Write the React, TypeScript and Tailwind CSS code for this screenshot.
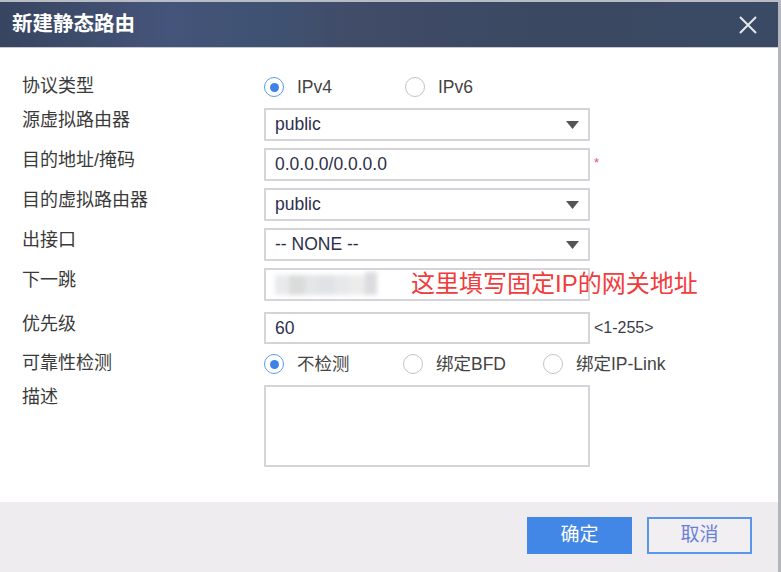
import type { ReactNode } from 'react';

const FONT = '"Liberation Sans", "Noto Sans CJK SC", sans-serif';

// ── Small pieces ─────────────────────────────────────────────────────────────

function Radio({ checked, label, width }: { checked?: boolean; label: string; width: string }) {
  return (
    <div className={`flex items-center ${width}`}>
      <span
        className={`flex h-[20px] w-[20px] items-center justify-center rounded-full border-[1.5px] bg-white ${
          checked ? 'border-[#5b9af0]' : 'border-[#c4c4c8]'
        }`}
      >
        {checked && <span className="h-[9px] w-[9px] rounded-full bg-[#3d83e6]" />}
      </span>
      <span className="ml-[13px] text-[17.5px] text-[#444]">{label}</span>
    </div>
  );
}

function Select({ value }: { value: string }) {
  return (
    <div className="flex h-[33px] w-[326px] items-center justify-between border-2 border-[#d4d4d9] bg-white pl-[9px] pr-[8px]">
      <span className="text-[17.5px] text-[#2d2f4a]">{value}</span>
      <svg width="13" height="8" viewBox="0 0 13 8" className="mr-[1px]">
        <path d="M0 0 H13 L6.5 8 Z" fill="#555" />
      </svg>
    </div>
  );
}

function Input({ value, height = 'h-[33px]', children }: { value?: string; height?: string; children?: ReactNode }) {
  return (
    <div className={`flex ${height} w-[326px] items-center border-2 border-[#d4d4d9] bg-white pl-[9px]`}>
      {value && <span className="text-[17.5px] text-[#2d2f4a]">{value}</span>}
      {children}
    </div>
  );
}

function Row({ label, className, children }: { label: string; className: string; children: ReactNode }) {
  return (
    <div className={`flex items-start ${className}`}>
      <div className="w-[242px] shrink-0 text-[18px] leading-6 text-[#3a3a3a]">{label}</div>
      <div className="flex items-center">{children}</div>
    </div>
  );
}

// ── Dialog ───────────────────────────────────────────────────────────────────

export default function App() {
  return (
    <div className="flex h-[572px] w-[781px] flex-col overflow-hidden bg-white" style={{ fontFamily: FONT }}>
      <div className="h-[2px] shrink-0 bg-[#b9bcc4]" />
      <div className="flex min-h-0 flex-1">
        <div className="flex min-w-0 flex-1 flex-col">
          {/* Header */}
          <div className="flex h-[45px] shrink-0 items-center justify-between bg-[linear-gradient(90deg,#384560_0%,#45547a_22%,#3f5272_34%,#414c68_45%,#3a4862_70%,#3b4a64_100%)] pl-[12px] pr-[20px]">
            <span className="text-[20.5px] font-bold text-white">新建静态路由</span>
            <svg width="20" height="20" viewBox="0 0 20 20">
              <path d="M2 2 L18 18 M18 2 L2 18" stroke="#e6e8ee" strokeWidth="2" />
            </svg>
          </div>
          <div className="h-[1px] shrink-0 bg-[#c8cad0]" />

          {/* Body */}
          <div className="flex-1 pl-[22px] pt-[26px]">
            <Row label="协议类型" className="h-[24px]">
              <Radio checked label="IPv4" width="w-[141px]" />
              <Radio label="IPv6" width="w-[140px]" />
            </Row>
            <Row label="源虚拟路由器" className="mt-[10px]">
              <Select value="public" />
            </Row>
            <Row label="目的地址/掩码" className="mt-[7px]">
              <Input value="0.0.0.0/0.0.0.0" />
              <span className="ml-[4px] -mt-[4px] text-[13px] text-[#f0506e]">*</span>
            </Row>
            <Row label="目的虚拟路由器" className="mt-[7px]">
              <Select value="public" />
            </Row>
            <Row label="出接口" className="mt-[7px]">
              <Select value="-- NONE --" />
            </Row>
            <Row label="下一跳" className="mt-[7px]">
              <div className="relative">
                <Input>
                  <div className="flex h-[20px] items-stretch opacity-80 blur-[2px]">
                    <span className="w-[14px] bg-[#e4e5e8]" />
                    <span className="w-[16px] bg-[#d2d3d3]" />
                    <span className="w-[14px] bg-[#dee0e2]" />
                    <span className="w-[16px] bg-[#dadcdf]" />
                    <span className="w-[14px] bg-[#e2e3e5]" />
                    <span className="w-[16px] bg-[#e8e8e6]" />
                    <span className="-mt-[3px] w-[12px] bg-[#d4d4d9]" />
                  </div>
                </Input>
                <span className="absolute left-[147px] top-[1px] whitespace-nowrap text-[24px] leading-[30px] text-[#f23b3b]">
                  这里填写固定IP的网关地址
                </span>
              </div>
            </Row>
            <Row label="优先级" className="mt-[11px]">
              <Input value="60" height="h-[32px]" />
              <span className="ml-[4px] text-[16px] text-[#3a3a4a]">&lt;1-255&gt;</span>
            </Row>
            <Row label="可靠性检测" className="mt-[7px] h-[24px]">
              <Radio checked label="不检测" width="w-[139px]" />
              <Radio label="绑定BFD" width="w-[140px]" />
              <Radio label="绑定IP-Link" width="w-[140px]" />
            </Row>
            <Row label="描述" className="mt-[10px]">
              <Input height="h-[82px]" />
            </Row>
          </div>

          {/* Footer */}
          <div className="flex h-[70px] shrink-0 items-start justify-end gap-[15px] bg-[#efecf0] pr-[26px] pt-[15px]">
            <button type="button" className="h-[37px] w-[105px] bg-[#4287e6] text-[19px] text-white">
              确定
            </button>
            <button
              type="button"
              className="h-[37px] w-[105px] border-2 border-[#5a95ec] bg-[#f2eff3] text-[19px] text-[#6b7fd8]"
            >
              取消
            </button>
          </div>
        </div>
        <div className="w-[3px] shrink-0 bg-[#b4b6bb]" />
      </div>
    </div>
  );
}
